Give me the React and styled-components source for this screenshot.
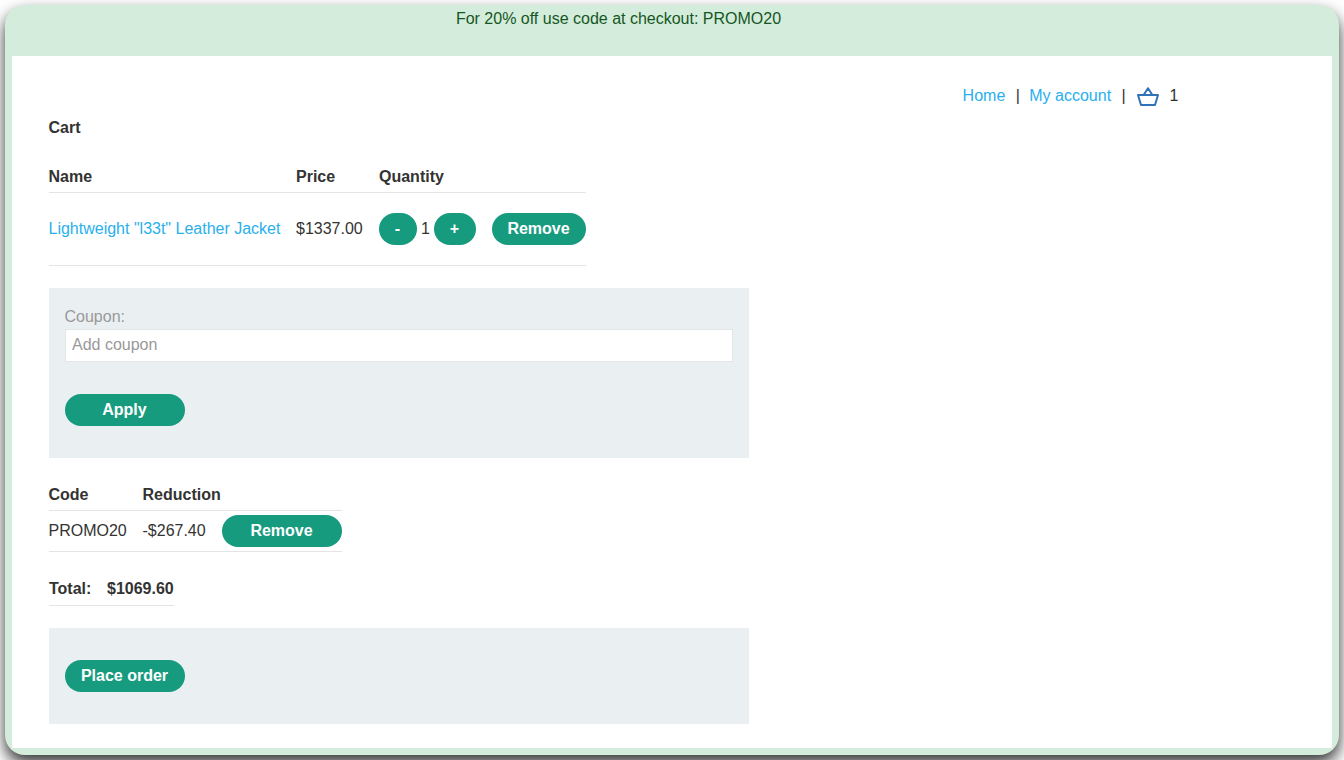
import React from "react";
import styled, { createGlobalStyle } from "styled-components";

const GlobalStyle = createGlobalStyle`
  * { box-sizing: border-box; }
  body {
    margin: 0;
    background: #fff;
    color: #333332;
    font: 16px/20px "Liberation Sans", Arial, sans-serif;
    overflow: hidden;
  }
`;

const Page = styled.div`
  height: 760px;
  padding: 5px;
  overflow: hidden;
`;

const Frame = styled.div`
  display: flex;
  flex-direction: column;
  height: 750px;
  padding: 0 7px 7px;
  border-radius: 20px;
  background: #d4ecdb;
  box-shadow: 0 8px 16px rgba(0, 0, 0, 0.8);
`;

const Banner = styled.header`
  flex: 0 0 51px;
  padding: 4px 107px 0 0;
  text-align: center;
  color: #155724;
`;

const Content = styled.main`
  flex: 1;
  padding: 30px 37px 0;
  background: #fff;
`;

const Nav = styled.nav`
  display: flex;
  align-items: center;
  justify-content: flex-end;
  height: 20px;
  padding-right: 116.5px;
`;

const Link = styled.a`
  color: #29afec;
  text-decoration: none;
`;

const Separator = styled.span`
  width: 24px;
  padding-left: 1px;
  text-align: center;
  color: #333332;
`;

const Basket = styled.svg`
  width: 24px;
  height: 22px;
  margin: 2px 9.5px 0 1px;
`;

const Title = styled.h1`
  margin: 12px 0 29px -0.5px;
  font-size: 16px;
  line-height: 20px;
`;

const Table = styled.section`
  width: ${(p) => p.$width}px;
  margin-top: ${(p) => p.$before || 0}px;
`;

const Row = styled.div`
  display: grid;
  grid-template-columns: ${(p) => p.$columns};
  align-items: center;
  height: ${(p) => p.$height}px;
  padding-bottom: ${(p) => p.$lift || 0}px;
  border-bottom: 1px solid #e4e4e4;
  font-weight: ${(p) => (p.$bold ? 700 : 400)};
  white-space: nowrap;
`;

const Cell = styled.span`
  margin-left: -0.5px;
`;

const Quantity = styled.div`
  display: flex;
  align-items: center;
  gap: 4px;
`;

const Button = styled.button`
  display: block;
  width: ${(p) => p.$width || 120}px;
  height: 32px;
  padding: 0 1px 1px 0;
  border: 0;
  border-radius: 16px;
  background: #169b7f;
  color: #fff;
  font: bold 16px/20px "Liberation Sans", Arial, sans-serif;
`;

const Panel = styled.section`
  width: 700px;
  height: ${(p) => p.$height}px;
  margin: 22px 0 ${(p) => p.$after || 0}px;
  padding: ${(p) => p.$top}px 16px 0;
  background: #eaeff2;
`;

const Label = styled.label`
  display: block;
  height: 22px;
  margin-left: -0.5px;
  color: #999;
`;

const Input = styled.input`
  display: block;
  width: 668px;
  height: 33px;
  margin-bottom: 32px;
  padding: 0 6px 1px;
  border: 1px solid #e2e6e6;
  background: #fff;
  font: inherit;
  &::placeholder { color: #999; opacity: 1; }
`;

const ITEM_COLUMNS = "247px 83px 113px 94px";
const CODE_COLUMNS = "94px 79px 120px";

export default function App() {
  return (
    <Page>
      <GlobalStyle />
      <Frame>
        <Banner>For 20% off use code at checkout: PROMO20</Banner>
        <Content>
          <Nav>
            <Link>Home</Link>
            <Separator>|</Separator>
            <Link>My account</Link>
            <Separator>|</Separator>
            <Basket viewBox="0 0 24 22" fill="none" stroke="#2f72b7" strokeWidth="2" strokeLinejoin="round">
              <path d="M2 9H22L19 19H5Z M7.6 9L12 2.2L16.4 9" />
            </Basket>
            <span>1</span>
          </Nav>
          <Title>Cart</Title>

          <Table $width={537}>
            <Row $columns={ITEM_COLUMNS} $height={26} $lift={5} $bold>
              <Cell>Name</Cell>
              <span>Price</span>
              <span>Quantity</span>
            </Row>
            <Row $columns={ITEM_COLUMNS} $height={73}>
              <Cell as={Link}>Lightweight "l33t" Leather Jacket</Cell>
              <span>$1337.00</span>
              <Quantity>
                <Button $width={38}>-</Button>
                <span>1</span>
                <Button $width={42}>+</Button>
              </Quantity>
              <Button $width={94}>Remove</Button>
            </Row>
          </Table>

          <Panel $height={170} $top={19} $after={27}>
            <Label htmlFor="coupon">Coupon:</Label>
            <Input id="coupon" placeholder="Add coupon" />
            <Button>Apply</Button>
          </Panel>

          <Table $width={293}>
            <Row $columns={CODE_COLUMNS} $height={26} $lift={5} $bold>
              <Cell>Code</Cell>
              <Cell>Reduction</Cell>
            </Row>
            <Row $columns={CODE_COLUMNS} $height={41}>
              <Cell>PROMO20</Cell>
              <Cell>-$267.40</Cell>
              <Button>Remove</Button>
            </Row>
          </Table>

          <Table $width={125} $before={27}>
            <Row $columns="58px 67px" $height={27} $lift={6} $bold>
              <span>Total:</span>
              <span>$1069.60</span>
            </Row>
          </Table>

          <Panel $height={96} $top={32}>
            <Button>Place order</Button>
          </Panel>
        </Content>
      </Frame>
    </Page>
  );
}
